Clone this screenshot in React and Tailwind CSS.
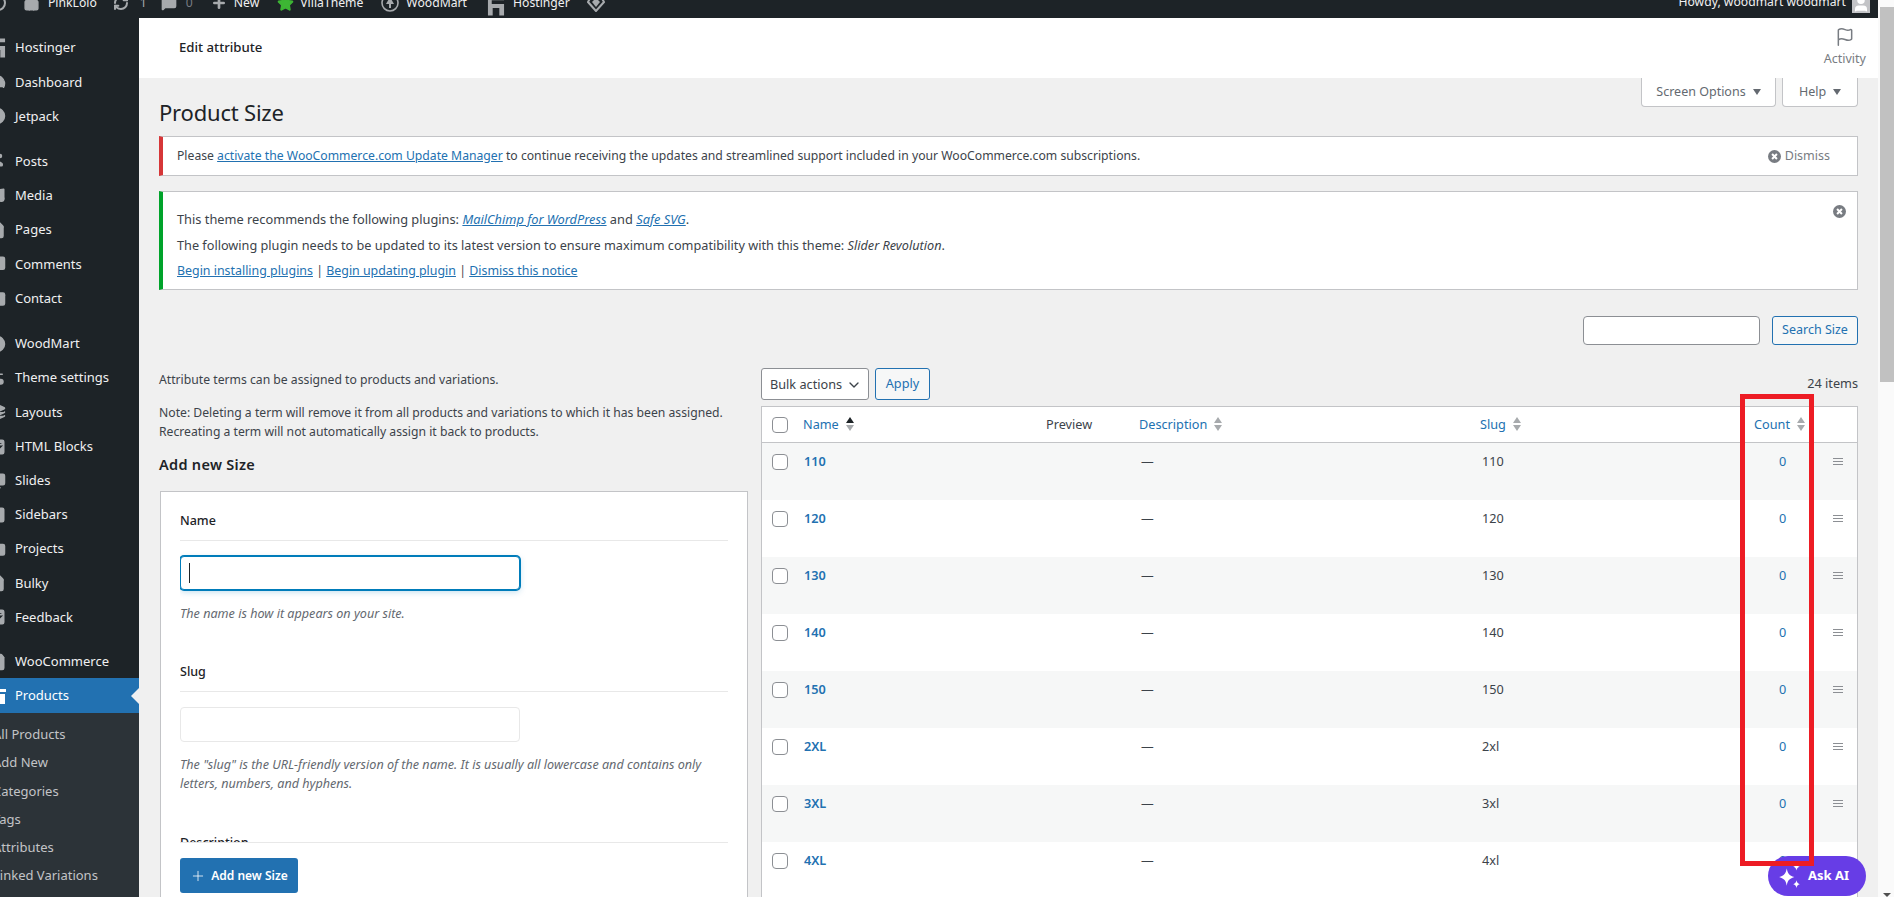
import {
  CircleDot, ChevronDown, File, Flag, Folder, Gauge, Home, Layers, Mail, MessageSquare, MonitorPlay, Music, PanelLeft, Pin, Plus, RefreshCw, Settings2, ShoppingBag, Star, Table2, User,
} from "lucide-react";

function HostingerIcon({ className }) {
  return (
    <svg width="18" height="22" viewBox="0 0 19 22" className={className}>
      <path d="M1 1 L18 1 V5 L5 5 V9 L18 9 V21 H13 V13 H6 V21 H1 Z" />
    </svg>
  );
}

function ArchiveIcon({ className }) {
  return (
    <svg width="18" height="18" viewBox="0 0 18 18" className={className}>
      <path d="M0 2 H18 V5 H0 Z M1 7 H17 V17 H1 Z" />
    </svg>
  );
}

const menuGroups = [
  [
    ["Hostinger", HostingerIcon],
    ["Dashboard", Gauge],
    ["Jetpack", CircleDot],
  ],
  [
    ["Posts", Pin],
    ["Media", Music],
    ["Pages", File],
    ["Comments", MessageSquare],
    ["Contact", Mail],
  ],
  [
    ["WoodMart", CircleDot],
    ["Theme settings", Settings2],
    ["Layouts", Layers],
    ["HTML Blocks", Table2],
    ["Slides", MonitorPlay],
    ["Sidebars", PanelLeft],
    ["Projects", Folder],
    ["Bulky", File],
    ["Feedback", Table2],
  ],
];

const subMenu = ["All Products", "Add New", "Categories", "Tags", "Attributes", "Linked Variations"];

const terms = [
  ["110", "110"],
  ["120", "120"],
  ["130", "130"],
  ["140", "140"],
  ["150", "150"],
  ["2XL", "2xl"],
  ["3XL", "3xl"],
  ["4XL", "4xl"],
];

function SortArrows({ active }) {
  return (
    <svg width="10" height="15" viewBox="0 0 10 15" className="ml-[6px] shrink-0">
      <path d="M5 0 L9 6 H1 Z" fill={active ? "#1d2327" : "#a7aaad"} />
      <path d="M5 14 L9 8 H1 Z" fill="#a7aaad" />
    </svg>
  );
}

function DismissIcon({ size = 13 }) {
  return (
    <svg width={size} height={size} viewBox="0 0 14 14" className="shrink-0">
      <circle cx="7" cy="7" r="7" fill="#787c82" />
      <path d="M4.4 4.4 L9.6 9.6 M9.6 4.4 L4.4 9.6" stroke="#fff" strokeWidth="2.2" />
    </svg>
  );
}

function Checkbox() {
  return <span className="block h-4 w-4 rounded-[4px] border border-[#8c8f94] bg-white" />;
}

function AdminBar() {
  const icon = "shrink-0 text-[#a7aaad]";
  return (
    <div className="flex h-[18px] shrink-0 items-end justify-between overflow-hidden bg-[#1d2327] text-[12.2px] leading-[32px] text-[#f0f0f1]">
      <div className="flex h-8 translate-y-px items-center">
        <span className="ml-[-10px] h-4 w-4 shrink-0 rounded-full border-2 border-[#a7aaad]" />
        <Home size={17} className={`${icon} ml-[17px] fill-[#a7aaad]`} />
        <span className="ml-[8px]">PinkLolo</span>
        <RefreshCw size={16} strokeWidth={3} className={`${icon} ml-[16px]`} />
        <span className="ml-[11px] text-[#a7aaad]">1</span>
        <MessageSquare size={16} className={`${icon} ml-[14px] fill-[#a7aaad]`} />
        <span className="ml-[9px] text-[#787c82]">0</span>
        <Plus size={16} strokeWidth={4} className={`${icon} ml-[18px]`} />
        <span className="ml-[7px]">New</span>
        <Star size={17} className="ml-[18px] shrink-0 fill-[#3db634] text-[#3db634]" />
        <span className="ml-[6px]">VillaTheme</span>
        <svg width="18" height="18" viewBox="0 0 18 18" className="ml-[18px] shrink-0">
          <circle cx="9" cy="9" r="8" fill="none" stroke="#a7aaad" strokeWidth="1.6" />
          <path d="M9 3 L13 10 H10 V14 H8 V10 H5 Z" fill="#a7aaad" />
        </svg>
        <span className="ml-[7px]">WoodMart</span>
        <HostingerIcon className="ml-[20px] shrink-0 translate-y-[3px] fill-[#a7aaad]" />
        <span className="ml-[8px]">Hostinger</span>
        <svg width="18" height="18" viewBox="0 0 18 18" className="ml-[17px] shrink-0">
          <path d="M9 17 L1 8 L5 1 H13 L17 8 Z" fill="none" stroke="#a7aaad" strokeWidth="2" />
          <path d="M9 13 L5 8 L9 4 L13 8 Z" fill="#a7aaad" />
        </svg>
      </div>
      <div className="flex h-8 items-center pr-2">
        <span>Howdy, woodmart woodmart</span>
        <span className="ml-[6px] flex h-[18px] w-[18px] translate-y-[2px] items-end justify-center overflow-hidden bg-[#c3c4c7]">
          <User size={18} className="fill-white text-white" />
        </span>
      </div>
    </div>
  );
}

function Sidebar() {
  return (
    <aside className="flex w-[139px] shrink-0 flex-col overflow-hidden bg-[#1d2327] pt-[13px] text-[13px] text-[#f0f0f1]">
      {menuGroups.map((group, i) => (
        <div key={i} className="mb-[11.2px]">
          {group.map(([label, Icon]) => (
            <div key={label} className="flex h-[34.2px] items-center">
              <Icon size={18} className="ml-[-12px] shrink-0 fill-[#a7aaad] text-[#a7aaad]" />
              <span className="ml-[9px] whitespace-nowrap">{label}</span>
            </div>
          ))}
        </div>
      ))}
      <div className="flex h-[32.5px] items-center">
        <ShoppingBag size={18} className="ml-[-12px] shrink-0 fill-[#a7aaad] text-[#a7aaad]" />
        <span className="ml-[9px]">WooCommerce</span>
      </div>
      <div className="flex h-[35px] items-center bg-[#2271b1] text-white">
        <ArchiveIcon className="ml-[-12px] shrink-0 fill-white" />
        <span className="ml-[9px]">Products</span>
        <span className="ml-auto h-0 w-0 border-y-[8px] border-r-[8px] border-y-transparent border-r-[#f0f0f1]" />
      </div>
      <div className="flex-1 bg-[#2c3338] pt-[7px] text-[#c3c4c7]">
        {subMenu.map((item) => (
          <div key={item} className="ml-[-7px] h-[28.2px] whitespace-nowrap leading-[28px]">
            {item}
          </div>
        ))}
      </div>
    </aside>
  );
}

function Notices() {
  return (
    <div className="text-[12.2px]">
      <div className="flex h-[40px] items-center justify-between border border-l-4 border-[#c3c4c7] border-l-[#d63638] bg-white pl-[14px] pr-[27px]">
        <p>
          Please <a className="text-[#2271b1] underline">activate the WooCommerce.com Update Manager</a> to continue receiving the updates and streamlined support included in your WooCommerce.com subscriptions.
        </p>
        <span className="flex items-center gap-[4px] text-[12.5px] text-[#787c82]">
          <DismissIcon />
          Dismiss
        </span>
      </div>
      <div className="mt-[15px] flex h-[99px] justify-between border border-l-4 border-[#c3c4c7] border-l-[#00a32a] bg-white pl-[14px] pr-[11px]">
        <div className="pt-[14px] leading-[26px]">
          <p className="text-[12.8px]">
            This theme recommends the following plugins: <a className="italic text-[#2271b1] underline">MailChimp for WordPress</a> and <a className="italic text-[#2271b1] underline">Safe SVG</a>.
          </p>
          <p className="text-[12.7px]">
            The following plugin needs to be updated to its latest version to ensure maximum compatibility with this theme: <em>Slider Revolution</em>.
          </p>
          <p className="text-[12.4px]">
            <a className="text-[#2271b1] underline">Begin installing plugins</a> | <a className="text-[#2271b1] underline">Begin updating plugin</a> | <a className="text-[#2271b1] underline">Dismiss this notice</a>
          </p>
        </div>
        <div className="pt-[13px]">
          <DismissIcon />
        </div>
      </div>
    </div>
  );
}

function AddTermForm() {
  return (
    <div className="w-[589px] shrink-0 pt-[25px] leading-[19px]">
      <p className="text-[12.2px]">Attribute terms can be assigned to products and variations.</p>
      <p className="mt-[14px] text-[12.2px]">
        Note: Deleting a term will remove it from all products and variations to which it has been assigned.
        <br />
        Recreating a term will not automatically assign it back to products.
      </p>
      <h2 className="mt-[13px] text-[14.5px] font-semibold leading-[20px] tracking-[0.3px] text-[#1d2327]">Add new Size</h2>
      <div className="ml-px mt-[17px] h-[500px] border border-[#c3c4c7] bg-white px-[19px]">
        <div className="h-[350px] overflow-hidden pt-[19px]">
          <div className="border-b border-[#e8e8e8] pb-[9px] font-medium leading-[20px] text-[#1d2327]">Name</div>
          <div className="mt-[15px] flex h-[34px] w-[340px] items-center rounded-[4px] border border-[#007cba] bg-white pl-[8px] shadow-[0_0_0_1px_#007cba,0_2px_6px_rgba(0,124,186,0.25)]">
            <span className="h-[20px] w-px bg-[#1d2327]" />
          </div>
          <p className="mt-[13.5px] text-[12.6px] italic text-[#646970]">The name is how it appears on your site.</p>
          <div className="mt-[39.5px] border-b border-[#e8e8e8] pb-[9px] font-medium leading-[20px] text-[#1d2327]">Slug</div>
          <div className="mt-[15px] h-[35px] w-[340px] rounded-[4px] border border-[#e8e8e8] bg-white" />
          <p className="mt-[12.5px] text-[12.6px] italic text-[#646970]">
            The "slug" is the URL-friendly version of the name. It is usually all lowercase and contains only
            <br />
            letters, numbers, and hyphens.
          </p>
          <div className="mt-[40.5px] font-medium leading-[20px] text-[#1d2327]">Description</div>
        </div>
        <div className="border-t border-[#e8e8e8] pt-[15px]">
          <button className="flex h-[35px] w-[118px] items-center justify-center gap-[5px] rounded-[3px] bg-[#2271b1] text-[12px] font-semibold text-white">
            <Plus size={16} strokeWidth={1.2} />
            Add new Size
          </button>
        </div>
      </div>
    </div>
  );
}

function TermsTable() {
  const columns = "grid grid-cols-[41px_243px_93px_341px_274px_66px_37px]";
  return (
    <div className="min-w-0 flex-1 pt-[23px] text-[12.7px]">
      <div className="flex h-[32px] items-center justify-between">
        <div className="flex gap-[6px]">
          <div className="flex h-[32px] w-[108px] items-center justify-between rounded-[3px] border border-[#8c8f94] bg-white pl-[8px] pr-[6px] pt-px">
            Bulk actions
            <ChevronDown size={16} strokeWidth={2} className="text-[#3c434a]" />
          </div>
          <button className="h-[32px] w-[55px] rounded-[3px] border border-[#2271b1] bg-[#f6f7f7] text-[#2271b1]">Apply</button>
        </div>
        <span>24 items</span>
      </div>
      <div className="mt-[6px] border border-[#c3c4c7] bg-white">
        <div className={`${columns} h-[36px] items-center border-b border-[#c3c4c7] pt-px`}>
          <div className="pl-[10px]"><Checkbox /></div>
          <div className="flex items-center text-[#2271b1]">Name<SortArrows active /></div>
          <div>Preview</div>
          <div className="flex items-center text-[#2271b1]">Description<SortArrows /></div>
          <div className="flex items-center text-[#2271b1]">Slug<SortArrows /></div>
          <div className="flex items-center text-[#2271b1]">Count<SortArrows /></div>
          <div />
        </div>
        {terms.map(([name, slug], i) => (
          <div key={name} className={`${columns} h-[57px] pt-[9px] leading-[19px] ${i % 2 === 0 ? "bg-[#f6f7f7]" : "bg-white"}`}>
            <div className="pl-[10px] pt-[2px]"><Checkbox /></div>
            <div className="pl-[1px] font-semibold text-[#2271b1]">{name}</div>
            <div />
            <div className="pl-[2px]">—</div>
            <div className="pl-[2px]">{slug}</div>
            <div className="pl-[25px] text-[#2271b1]">0</div>
            <div className="pl-[13px] pt-[6px]">
              <div className="flex w-[10px] flex-col gap-[2px]">
                <span className="h-px bg-[#8c8f94]" />
                <span className="h-px bg-[#8c8f94]" />
                <span className="h-px bg-[#8c8f94]" />
              </div>
            </div>
          </div>
        ))}
      </div>
    </div>
  );
}

export default function App() {
  return (
    <div className="relative flex h-screen overflow-hidden bg-[#fafafa] font-['Noto_Sans',sans-serif] text-[12.5px] text-[#3c434a]">
      <div className="flex w-[1878px] shrink-0 flex-col">
        <AdminBar />
        <div className="flex min-h-0 flex-1">
          <Sidebar />
          <main className="min-w-0 flex-1 overflow-hidden bg-[#f0f0f0]">
            <header className="flex h-[60px] items-center justify-between bg-white pl-[40px] pr-[12px]">
              <span className="text-[13.2px] font-medium text-[#1d2327]">Edit attribute</span>
              <span className="flex flex-col items-center gap-[3px] text-[#787c82]">
                <Flag size={20} strokeWidth={1.8} />
                Activity
              </span>
            </header>
            <div className="px-[20px]">
              <div className="flex h-[58px] items-start justify-between">
                <h1 className="mt-[19px] text-[22px] leading-[30px] tracking-[-0.2px] text-[#1d2327]">Product Size</h1>
                <div className="flex gap-[6px]">
                  <span className="flex h-[29px] w-[135px] items-center justify-center gap-[7px] rounded-b-[4px] border border-t-0 border-[#c3c4c7] bg-white text-[#646970]">
                    Screen Options
                    <span className="h-0 w-0 border-x-[4px] border-t-[6px] border-x-transparent border-t-[#646970]" />
                  </span>
                  <span className="flex h-[29px] w-[76px] items-center justify-center gap-[7px] rounded-b-[4px] border border-t-0 border-[#c3c4c7] bg-white text-[#646970]">
                    Help
                    <span className="h-0 w-0 border-x-[4px] border-t-[6px] border-x-transparent border-t-[#646970]" />
                  </span>
                </div>
              </div>
              <Notices />
              <div className="mt-[26px] flex justify-end gap-[12px]">
                <div className="h-[29px] w-[177px] rounded-[4px] border border-[#8c8f94] bg-white" />
                <button className="h-[29px] w-[86px] rounded-[3px] border border-[#2271b1] bg-[#f6f7f7] text-[#2271b1]">Search Size</button>
              </div>
              <div className="flex gap-[13px]">
                <AddTermForm />
                <TermsTable />
              </div>
            </div>
          </main>
        </div>
      </div>
      <div className="flex flex-1 flex-col items-end justify-between pt-[7px]">
        <div className="h-[375px] w-[14px] bg-[#c1c1c1]" />
        <span className="mr-[3px] h-0 w-0 border-x-[4px] border-t-[4px] border-x-transparent border-t-[#505050]" />
      </div>

      {/* annotation + chat bubble sit over the page */}
      <button className="absolute left-[1768px] top-[856px] flex h-[40px] w-[98px] items-center gap-[5px] rounded-full bg-[#673de6] pl-[9px] text-[13px] font-bold text-white">
        <svg width="26" height="26" viewBox="0 0 24 24" fill="#fff">
          <path d="M9 5 C10 10 11 11 16 13 C11 15 10 16 9 21 C8 16 7 15 2 13 C7 11 8 10 9 5 Z" />
          <path d="M18 0 C18.5 2 19 3 21 3.5 C19 4 18.5 5 18 7 C17.500 5 17 4 15 3.500 C17 3 17.500 2 18 0 Z" />
          <path d="M18 16 C18.500 18 19 19 21 19.500 C19 20 18.500 21 18 23 C17.500 21 17 20 15 19.500 C17 19 17.500 18 18 16 Z" />
        </svg>
        Ask AI
      </button>
      <div className="pointer-events-none absolute left-[1740px] top-[394px] h-[472px] w-[74px] border-[5px] border-[#ed1c24]" />
    </div>
  );
}
